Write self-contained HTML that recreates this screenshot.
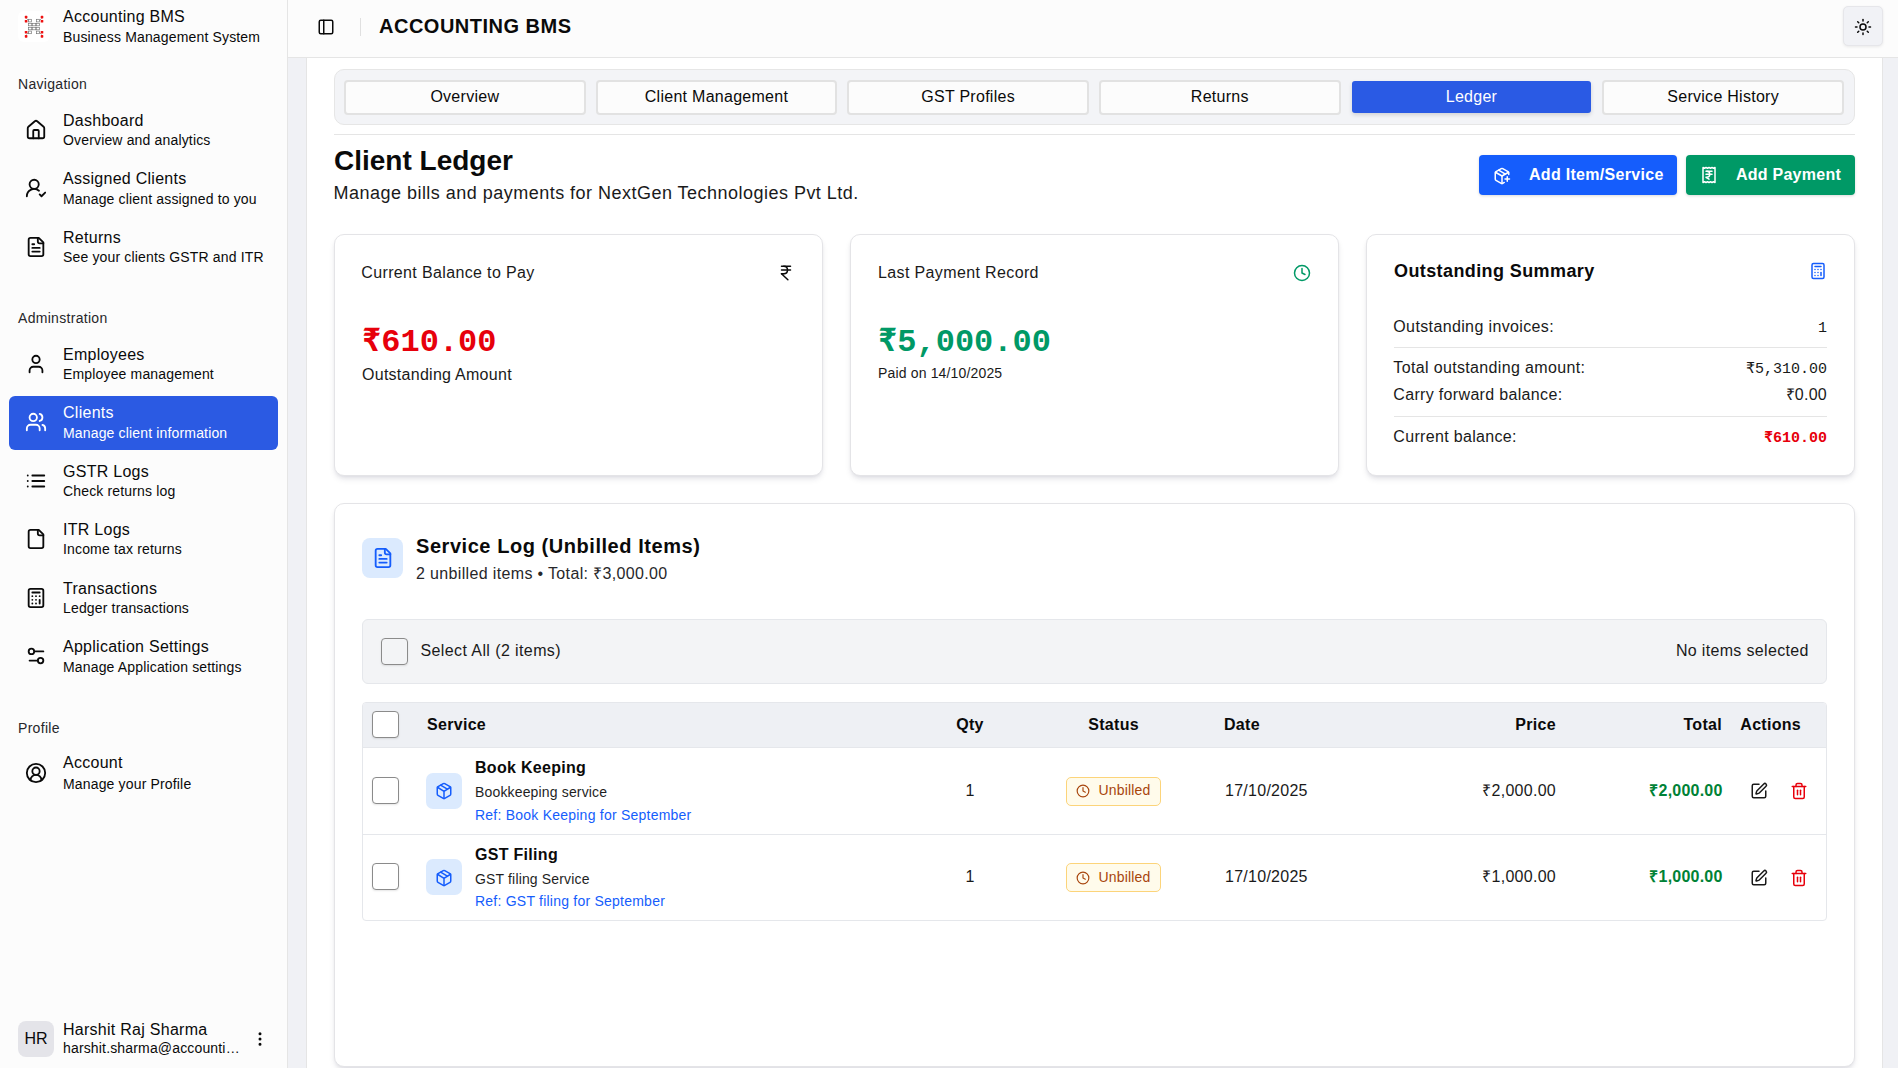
<!DOCTYPE html>
<html><head><meta charset="utf-8"><title>Accounting BMS - Client Ledger</title>
<style>
html,body{margin:0;padding:0;width:1898px;height:1068px;overflow:hidden;background:#fff;}
body{position:relative;font-family:"Liberation Sans",sans-serif;-webkit-font-smoothing:antialiased;}
.b{position:absolute;}
.t{position:absolute;white-space:nowrap;}
.s{font-family:"Liberation Sans",sans-serif;}
.m{font-family:"Liberation Mono",monospace;}
.i{position:absolute;overflow:visible;}
</style></head><body>
<div class="b" style="left:0px;top:0px;width:287px;height:1068px;background:#fcfcfc;"></div>
<div class="b" style="left:287px;top:0px;width:1px;height:1068px;background:#e5e5e5;"></div>
<div class="b" style="left:288px;top:0px;width:1610px;height:57px;background:#fcfcfc;"></div>
<div class="b" style="left:288px;top:57px;width:1610px;height:1px;background:#e5e5e5;"></div>
<div class="b" style="left:288px;top:58px;width:18px;height:1010px;background:#f0f1f5;"></div>
<div class="b" style="left:306px;top:58px;width:1px;height:1010px;background:#e5e5e5;"></div>
<div class="b" style="left:1882px;top:58px;width:1px;height:1010px;background:#e5e5e5;"></div>
<div class="b" style="left:1883px;top:58px;width:15px;height:1010px;background:#f0f1f5;"></div>
<div class="b" style="left:307px;top:58px;width:1575px;height:1010px;background:#ffffff;"></div>
<svg class="i" style="left:18px;top:11px;width:32px;height:31px" viewBox="0 0 32 31">
<rect x="0" y="0" width="32" height="31" rx="6" fill="#ffffff"/>
<g fill="none" stroke="#707070" stroke-width="0.65">
<rect x="10.5" y="8.3" width="3" height="2.6"/><rect x="18.5" y="8.3" width="3" height="2.6"/>
<rect x="10.5" y="12.3" width="3.5" height="2.5"/><rect x="14" y="12.3" width="4" height="2.5"/><rect x="18" y="12.3" width="3.5" height="2.5"/>
<rect x="10.5" y="16.3" width="3.5" height="2.5"/><rect x="14" y="16.3" width="4" height="2.5"/><rect x="18" y="16.3" width="3.5" height="2.5"/>
<rect x="10.5" y="20.1" width="3" height="2.6"/><rect x="18.5" y="20.1" width="3" height="2.6"/>
<path d="M8.5 7.5 L10.5 9.5 M23.5 7.5 L21.5 9.5 M8.5 23.5 L10.5 21.5 M23.5 23.5 L21.5 21.5"/>
</g>
<g fill="#ee1111">
<rect x="6.8" y="4.8" width="2.6" height="2.6" rx="0.6"/><rect x="6.8" y="8.9" width="2.6" height="2.6" rx="0.6"/>
<rect x="6.8" y="20" width="2.6" height="2.6" rx="0.6"/><rect x="6.8" y="24.1" width="2.6" height="2.6" rx="0.6"/>
<rect x="22.7" y="4.8" width="2.6" height="2.6" rx="0.6"/><rect x="22.7" y="8.9" width="2.6" height="2.6" rx="0.6"/>
<rect x="22.7" y="20" width="2.6" height="2.6" rx="0.6"/><rect x="22.7" y="24.1" width="2.6" height="2.6" rx="0.6"/>
</g></svg>
<div class="t s" style="top:9.00px;font-size:16px;line-height:16px;color:#0a0a0a;letter-spacing:0.27px;left:63.00px;">Accounting BMS</div>
<div class="t s" style="top:30.00px;font-size:14px;line-height:14px;color:#0a0a0a;letter-spacing:0.16px;left:63.00px;">Business Management System</div>
<div class="t s" style="top:77.00px;font-size:14px;line-height:14px;color:#27272a;letter-spacing:0.3px;left:18.00px;">Navigation</div>
<div class="t s" style="top:311.00px;font-size:14px;line-height:14px;color:#27272a;letter-spacing:0.3px;left:18.00px;">Adminstration</div>
<div class="t s" style="top:721.00px;font-size:14px;line-height:14px;color:#27272a;letter-spacing:0.3px;left:18.00px;">Profile</div>
<div class="b" style="left:9px;top:396px;width:269px;height:54px;background:#2b5ae3;border-radius:6px;"></div>
<svg class="i" style="left:25.30px;top:118.80px;width:22px;height:22px;color:#0a0a0a" viewBox="0 0 24 24" fill="none" stroke="currentColor" stroke-width="2" stroke-linecap="round" stroke-linejoin="round"><path d="M15 21v-8a1 1 0 0 0-1-1h-4a1 1 0 0 0-1 1v8"/><path d="M3 10a2 2 0 0 1 .709-1.528l7-5.999a2 2 0 0 1 2.582 0l7 5.999A2 2 0 0 1 21 10v9a2 2 0 0 1-2 2H5a2 2 0 0 1-2-2z"/></svg>
<div class="t s" style="top:113.00px;font-size:16px;line-height:16px;color:#0a0a0a;letter-spacing:0.27px;left:63.00px;">Dashboard</div>
<div class="t s" style="top:133.00px;font-size:14px;line-height:14px;color:#0a0a0a;letter-spacing:0.16px;left:63.00px;">Overview and analytics</div>
<svg class="i" style="left:25.30px;top:177.00px;width:22px;height:22px;color:#0a0a0a" viewBox="0 0 24 24" fill="none" stroke="currentColor" stroke-width="2" stroke-linecap="round" stroke-linejoin="round"><path d="M2 21a8 8 0 0 1 13.292-5.984"/><path d="m16 19 2 2 4-4"/><circle cx="10" cy="8" r="5"/></svg>
<div class="t s" style="top:171.00px;font-size:16px;line-height:16px;color:#0a0a0a;letter-spacing:0.27px;left:63.00px;">Assigned Clients</div>
<div class="t s" style="top:192.00px;font-size:14px;line-height:14px;color:#0a0a0a;letter-spacing:0.16px;left:63.00px;">Manage client assigned to you</div>
<svg class="i" style="left:25.30px;top:236.00px;width:22px;height:22px;color:#0a0a0a" viewBox="0 0 24 24" fill="none" stroke="currentColor" stroke-width="2" stroke-linecap="round" stroke-linejoin="round"><path d="M15 2H6a2 2 0 0 0-2 2v16a2 2 0 0 0 2 2h12a2 2 0 0 0 2-2V7Z"/><path d="M14 2v4a2 2 0 0 0 2 2h4"/><path d="M10 9H8"/><path d="M16 13H8"/><path d="M16 17H8"/></svg>
<div class="t s" style="top:230.00px;font-size:16px;line-height:16px;color:#0a0a0a;letter-spacing:0.27px;left:63.00px;">Returns</div>
<div class="t s" style="top:250.00px;font-size:14px;line-height:14px;color:#0a0a0a;letter-spacing:0.16px;left:63.00px;">See your clients GSTR and ITR</div>
<svg class="i" style="left:25.30px;top:352.80px;width:22px;height:22px;color:#0a0a0a" viewBox="0 0 24 24" fill="none" stroke="currentColor" stroke-width="2" stroke-linecap="round" stroke-linejoin="round"><path d="M19 21v-2a4 4 0 0 0-4-4H9a4 4 0 0 0-4 4v2"/><circle cx="12" cy="7" r="4"/></svg>
<div class="t s" style="top:347.00px;font-size:16px;line-height:16px;color:#0a0a0a;letter-spacing:0.27px;left:63.00px;">Employees</div>
<div class="t s" style="top:367.00px;font-size:14px;line-height:14px;color:#0a0a0a;letter-spacing:0.16px;left:63.00px;">Employee management</div>
<svg class="i" style="left:25.30px;top:411.00px;width:22px;height:22px;color:#ffffff" viewBox="0 0 24 24" fill="none" stroke="currentColor" stroke-width="2" stroke-linecap="round" stroke-linejoin="round"><path d="M16 21v-2a4 4 0 0 0-4-4H6a4 4 0 0 0-4 4v2"/><path d="M16 3.128a4 4 0 0 1 0 7.744"/><path d="M22 21v-2a4 4 0 0 0-3-3.87"/><circle cx="9" cy="7" r="4"/></svg>
<div class="t s" style="top:405.00px;font-size:16px;line-height:16px;color:#ffffff;letter-spacing:0.27px;left:63.00px;">Clients</div>
<div class="t s" style="top:426.00px;font-size:14px;line-height:14px;color:#ffffff;letter-spacing:0.16px;left:63.00px;">Manage client information</div>
<svg class="i" style="left:25.30px;top:470.00px;width:22px;height:22px;color:#0a0a0a" viewBox="0 0 24 24" fill="none" stroke="currentColor" stroke-width="2" stroke-linecap="round" stroke-linejoin="round"><path d="M3 12h.01"/><path d="M3 18h.01"/><path d="M3 6h.01"/><path d="M8 12h13"/><path d="M8 18h13"/><path d="M8 6h13"/></svg>
<div class="t s" style="top:464.00px;font-size:16px;line-height:16px;color:#0a0a0a;letter-spacing:0.27px;left:63.00px;">GSTR Logs</div>
<div class="t s" style="top:484.00px;font-size:14px;line-height:14px;color:#0a0a0a;letter-spacing:0.16px;left:63.00px;">Check returns log</div>
<svg class="i" style="left:25.30px;top:527.60px;width:22px;height:22px;color:#0a0a0a" viewBox="0 0 24 24" fill="none" stroke="currentColor" stroke-width="2" stroke-linecap="round" stroke-linejoin="round"><path d="M15 2H6a2 2 0 0 0-2 2v16a2 2 0 0 0 2 2h12a2 2 0 0 0 2-2V7Z"/><path d="M14 2v4a2 2 0 0 0 2 2h4"/></svg>
<div class="t s" style="top:522.00px;font-size:16px;line-height:16px;color:#0a0a0a;letter-spacing:0.27px;left:63.00px;">ITR Logs</div>
<div class="t s" style="top:542.00px;font-size:14px;line-height:14px;color:#0a0a0a;letter-spacing:0.16px;left:63.00px;">Income tax returns</div>
<svg class="i" style="left:25.30px;top:586.70px;width:22px;height:22px;color:#0a0a0a" viewBox="0 0 24 24" fill="none" stroke="currentColor" stroke-width="2" stroke-linecap="round" stroke-linejoin="round"><rect width="16" height="20" x="4" y="2" rx="2"/><line x1="8" x2="16" y1="6" y2="6"/><line x1="16" x2="16" y1="14" y2="18"/><path d="M16 10h.01"/><path d="M12 10h.01"/><path d="M8 10h.01"/><path d="M12 14h.01"/><path d="M8 14h.01"/><path d="M12 18h.01"/><path d="M8 18h.01"/></svg>
<div class="t s" style="top:581.00px;font-size:16px;line-height:16px;color:#0a0a0a;letter-spacing:0.27px;left:63.00px;">Transactions</div>
<div class="t s" style="top:601.00px;font-size:14px;line-height:14px;color:#0a0a0a;letter-spacing:0.16px;left:63.00px;">Ledger transactions</div>
<svg class="i" style="left:25.30px;top:645.10px;width:22px;height:22px;color:#0a0a0a" viewBox="0 0 24 24" fill="none" stroke="currentColor" stroke-width="2" stroke-linecap="round" stroke-linejoin="round"><path d="M20 7h-9"/><path d="M14 17H5"/><circle cx="17" cy="17" r="3"/><circle cx="7" cy="7" r="3"/></svg>
<div class="t s" style="top:639.00px;font-size:16px;line-height:16px;color:#0a0a0a;letter-spacing:0.27px;left:63.00px;">Application Settings</div>
<div class="t s" style="top:660.00px;font-size:14px;line-height:14px;color:#0a0a0a;letter-spacing:0.16px;left:63.00px;">Manage Application settings</div>
<svg class="i" style="left:25.30px;top:762.40px;width:22px;height:22px;color:#0a0a0a" viewBox="0 0 24 24" fill="none" stroke="currentColor" stroke-width="2" stroke-linecap="round" stroke-linejoin="round"><path d="M18 20a6 6 0 0 0-12 0"/><circle cx="12" cy="10" r="4"/><circle cx="12" cy="12" r="10"/></svg>
<div class="t s" style="top:755.00px;font-size:16px;line-height:16px;color:#0a0a0a;letter-spacing:0.27px;left:63.00px;">Account</div>
<div class="t s" style="top:777.00px;font-size:14px;line-height:14px;color:#0a0a0a;letter-spacing:0.16px;left:63.00px;">Manage your Profile</div>
<div class="b" style="left:18px;top:1021px;width:36px;height:36px;background:#e4e4e9;border-radius:8px;"></div>
<div class="t s" style="top:1031.00px;font-size:16px;line-height:16px;color:#0a0a0a;left:36.00px;transform:translateX(-50%);">HR</div>
<div class="t s" style="top:1022.00px;font-size:16px;line-height:16px;color:#0a0a0a;letter-spacing:0.27px;left:63.00px;">Harshit Raj Sharma</div>
<div class="t s" style="top:1041.00px;font-size:14px;line-height:14px;color:#0a0a0a;letter-spacing:0.16px;left:63.00px;">harshit.sharma@accounti…</div>
<svg class="i" style="left:251.00px;top:1030.00px;width:18px;height:18px;color:#0a0a0a" viewBox="0 0 24 24" fill="none" stroke="currentColor" stroke-width="2" stroke-linecap="round" stroke-linejoin="round"><circle cx="12" cy="12" r="1"/><circle cx="12" cy="5" r="1"/><circle cx="12" cy="19" r="1"/></svg>
<svg class="i" style="left:317.00px;top:18.00px;width:18px;height:18px;color:#0a0a0a" viewBox="0 0 24 24" fill="none" stroke="currentColor" stroke-width="2" stroke-linecap="round" stroke-linejoin="round"><rect width="18" height="18" x="3" y="3" rx="2"/><path d="M9 3v18"/></svg>
<div class="b" style="left:360px;top:18px;width:1px;height:18px;background:#e0e0e0;"></div>
<div class="t s" style="top:16.00px;font-size:20px;line-height:20px;color:#0a0a0a;font-weight:700;letter-spacing:0.5px;left:379.00px;">ACCOUNTING BMS</div>
<div class="b" style="left:1843px;top:6px;width:40px;height:40px;background:#f1f2f6;border:1px solid #e6e6ea;border-radius:5px;box-shadow:0 1px 3px rgba(0,0,0,0.08);box-sizing:border-box;"></div>
<svg class="i" style="left:1854.00px;top:18.00px;width:18px;height:18px;color:#0a0a0a" viewBox="0 0 24 24" fill="none" stroke="currentColor" stroke-width="2" stroke-linecap="round" stroke-linejoin="round"><circle cx="12" cy="12" r="4"/><path d="M12 2v2"/><path d="M12 20v2"/><path d="m4.93 4.93 1.41 1.41"/><path d="m17.66 17.66 1.41 1.41"/><path d="M2 12h2"/><path d="M20 12h2"/><path d="m6.34 17.66-1.41 1.41"/><path d="m19.07 4.93-1.41 1.41"/></svg>
<div class="b" style="left:334px;top:69px;width:1521px;height:56px;background:#f3f4f7;border:1px solid #e6e6e6;border-radius:10px;box-sizing:border-box;"></div>
<div class="b" style="left:344.0px;top:79.5px;width:241.7px;height:35px;background:#fcfcfc;border:2px solid #e2e2e2;border-radius:4px;box-sizing:border-box;"></div>
<div class="t s" style="top:89.00px;font-size:16px;line-height:16px;color:#0a0a0a;letter-spacing:0.27px;left:464.80px;transform:translateX(-50%);">Overview</div>
<div class="b" style="left:595.67px;top:79.5px;width:241.7px;height:35px;background:#fcfcfc;border:2px solid #e2e2e2;border-radius:4px;box-sizing:border-box;"></div>
<div class="t s" style="top:89.00px;font-size:16px;line-height:16px;color:#0a0a0a;letter-spacing:0.27px;left:716.47px;transform:translateX(-50%);">Client Management</div>
<div class="b" style="left:847.34px;top:79.5px;width:241.7px;height:35px;background:#fcfcfc;border:2px solid #e2e2e2;border-radius:4px;box-sizing:border-box;"></div>
<div class="t s" style="top:89.00px;font-size:16px;line-height:16px;color:#0a0a0a;letter-spacing:0.27px;left:968.14px;transform:translateX(-50%);">GST Profiles</div>
<div class="b" style="left:1099.01px;top:79.5px;width:241.7px;height:35px;background:#fcfcfc;border:2px solid #e2e2e2;border-radius:4px;box-sizing:border-box;"></div>
<div class="t s" style="top:89.00px;font-size:16px;line-height:16px;color:#0a0a0a;letter-spacing:0.27px;left:1219.81px;transform:translateX(-50%);">Returns</div>
<div class="b" style="left:1352.18px;top:80.7px;width:238.7px;height:32.6px;background:#2a5ae4;border-radius:3px;box-shadow:0 2px 4px rgba(0,0,0,0.14);"></div>
<div class="t s" style="top:89.00px;font-size:16px;line-height:16px;color:#ffffff;letter-spacing:0.27px;left:1471.48px;transform:translateX(-50%);">Ledger</div>
<div class="b" style="left:1602.35px;top:79.5px;width:241.7px;height:35px;background:#fcfcfc;border:2px solid #e2e2e2;border-radius:4px;box-sizing:border-box;"></div>
<div class="t s" style="top:89.00px;font-size:16px;line-height:16px;color:#0a0a0a;letter-spacing:0.27px;left:1723.15px;transform:translateX(-50%);">Service History</div>
<div class="b" style="left:334px;top:134px;width:1521px;height:1px;background:#e5e5e5;"></div>
<div class="t s" style="top:147.00px;font-size:28px;line-height:28px;color:#0a0a0a;font-weight:700;left:334.00px;">Client Ledger</div>
<div class="t s" style="top:184.00px;font-size:18px;line-height:18px;color:#1a1a1a;letter-spacing:0.48px;left:333.50px;">Manage bills and payments for NextGen Technologies Pvt Ltd.</div>
<div class="b" style="left:1479px;top:155px;width:198px;height:40px;background:#155dfc;border-radius:4px;box-shadow:0 1px 3px rgba(0,0,0,0.15);"></div>
<svg class="i" style="left:1493.00px;top:166.50px;width:18px;height:18px;color:#ffffff" viewBox="0 0 24 24" fill="none" stroke="currentColor" stroke-width="2" stroke-linecap="round" stroke-linejoin="round"><path d="M16 16h6"/><path d="M19 13v6"/><path d="M21 10V8a2 2 0 0 0-1-1.73l-7-4a2 2 0 0 0-2 0l-7 4A2 2 0 0 0 3 8v8a2 2 0 0 0 1 1.73l7 4a2 2 0 0 0 2 0l2-1.14"/><path d="m7.5 4.27 9 5.15"/><polyline points="3.29 7 12 12 20.71 7"/><line x1="12" x2="12" y1="22" y2="12"/></svg>
<div class="t s" style="top:167.00px;font-size:16px;line-height:16px;color:#ffffff;font-weight:700;letter-spacing:0.3px;left:1529.00px;">Add Item/Service</div>
<div class="b" style="left:1686px;top:155px;width:169px;height:40px;background:#009966;border-radius:4px;box-shadow:0 1px 3px rgba(0,0,0,0.15);"></div>
<svg class="i" style="left:1699.50px;top:166.00px;width:18px;height:18px;color:#ffffff" viewBox="0 0 24 24" fill="none" stroke="currentColor" stroke-width="2" stroke-linecap="round" stroke-linejoin="round"><path d="M4 2v20l2-1 2 1 2-1 2 1 2-1 2 1 2-1 2 1V2l-2 1-2-1-2 1-2-1-2 1-2-1-2 1Z"/><path d="M8 7h8"/><path d="M12 17.5 8 15h1a4 4 0 0 0 0-8"/><path d="M8 11h8"/></svg>
<div class="t s" style="top:167.00px;font-size:16px;line-height:16px;color:#ffffff;font-weight:700;letter-spacing:0.25px;left:1736.00px;">Add Payment</div>
<div class="b" style="left:334px;top:234px;width:489px;height:242px;background:#fff;border:1px solid #e4e4e7;border-radius:10px;box-shadow:0 4px 6px -1px rgba(20,20,60,0.10),0 2px 4px -2px rgba(20,20,60,0.10);box-sizing:border-box;"></div>
<div class="b" style="left:850px;top:234px;width:489px;height:242px;background:#fff;border:1px solid #e4e4e7;border-radius:10px;box-shadow:0 4px 6px -1px rgba(20,20,60,0.10),0 2px 4px -2px rgba(20,20,60,0.10);box-sizing:border-box;"></div>
<div class="b" style="left:1366px;top:234px;width:489px;height:242px;background:#fff;border:1px solid #e4e4e7;border-radius:10px;box-shadow:0 4px 6px -1px rgba(20,20,60,0.10),0 2px 4px -2px rgba(20,20,60,0.10);box-sizing:border-box;"></div>
<div class="t s" style="top:265.00px;font-size:16px;line-height:16px;color:#1a1a1a;letter-spacing:0.36px;left:361.30px;">Current Balance to Pay</div>
<svg class="i" style="left:776.80px;top:263.60px;width:18px;height:18px;color:#0a0a0a" viewBox="0 0 24 24" fill="none" stroke="currentColor" stroke-width="2" stroke-linecap="round" stroke-linejoin="round"><path d="M6 3h12"/><path d="M6 8h12"/><path d="m6 13 8.5 8"/><path d="M6 13h3"/><path d="M9 13c6.667 0 6.667-10 0-10"/></svg>
<div class="t m" style="top:327.00px;font-size:32px;line-height:32px;color:#e7000b;font-weight:700;left:362.00px;">₹610.00</div>
<div class="t s" style="top:367.00px;font-size:16px;line-height:16px;color:#1a1a1a;letter-spacing:0.27px;left:362.00px;">Outstanding Amount</div>
<div class="t s" style="top:265.00px;font-size:16px;line-height:16px;color:#1a1a1a;letter-spacing:0.37px;left:878.00px;">Last Payment Record</div>
<svg class="i" style="left:1292.50px;top:264.00px;width:18px;height:18px;color:#009966" viewBox="0 0 24 24" fill="none" stroke="currentColor" stroke-width="2" stroke-linecap="round" stroke-linejoin="round"><circle cx="12" cy="12" r="10"/><polyline points="12 6 12 12 16 14"/></svg>
<div class="t m" style="top:327.00px;font-size:32px;line-height:32px;color:#009966;font-weight:700;left:878.00px;">₹5,000.00</div>
<div class="t s" style="top:366.00px;font-size:14px;line-height:14px;color:#1a1a1a;letter-spacing:0.16px;left:878.00px;">Paid on 14/10/2025</div>
<div class="t s" style="top:262.00px;font-size:18px;line-height:18px;color:#0a0a0a;font-weight:700;letter-spacing:0.4px;left:1394.00px;">Outstanding Summary</div>
<svg class="i" style="left:1809.00px;top:262.00px;width:18px;height:18px;color:#155dfc" viewBox="0 0 24 24" fill="none" stroke="currentColor" stroke-width="2" stroke-linecap="round" stroke-linejoin="round"><rect width="16" height="20" x="4" y="2" rx="2"/><line x1="8" x2="16" y1="6" y2="6"/><line x1="16" x2="16" y1="14" y2="18"/><path d="M16 10h.01"/><path d="M12 10h.01"/><path d="M8 10h.01"/><path d="M12 14h.01"/><path d="M8 14h.01"/><path d="M12 18h.01"/><path d="M8 18h.01"/></svg>
<div class="t s" style="top:319.00px;font-size:16px;line-height:16px;color:#1a1a1a;letter-spacing:0.37px;left:1393.30px;">Outstanding invoices:</div>
<div class="t m" style="top:321.00px;font-size:15px;line-height:15px;color:#1a1a1a;right:71.00px;">1</div>
<div class="b" style="left:1394px;top:347px;width:433px;height:1px;background:#e5e5e5;"></div>
<div class="t s" style="top:360.00px;font-size:16px;line-height:16px;color:#1a1a1a;letter-spacing:0.35px;left:1393.30px;">Total outstanding amount:</div>
<div class="t m" style="top:362.00px;font-size:15px;line-height:15px;color:#1a1a1a;right:71.00px;">₹5,310.00</div>
<div class="t s" style="top:387.00px;font-size:16px;line-height:16px;color:#1a1a1a;letter-spacing:0.33px;left:1393.30px;">Carry forward balance:</div>
<div class="t s" style="top:387.00px;font-size:16px;line-height:16px;color:#1a1a1a;letter-spacing:0.27px;right:71.00px;">₹0.00</div>
<div class="b" style="left:1394px;top:416px;width:433px;height:1px;background:#e5e5e5;"></div>
<div class="t s" style="top:429.00px;font-size:16px;line-height:16px;color:#1a1a1a;letter-spacing:0.33px;left:1393.30px;">Current balance:</div>
<div class="t m" style="top:431.00px;font-size:15px;line-height:15px;color:#e7000b;font-weight:700;right:71.00px;">₹610.00</div>
<div class="b" style="left:334px;top:503px;width:1521px;height:564px;background:#fff;border:1px solid #e4e4e7;border-radius:10px;box-shadow:0 4px 6px -1px rgba(20,20,60,0.10),0 2px 4px -2px rgba(20,20,60,0.10);box-sizing:border-box;"></div>
<div class="b" style="left:362px;top:538px;width:41px;height:40px;background:#dbeafe;border-radius:8px;"></div>
<svg class="i" style="left:371.50px;top:547.20px;width:22px;height:22px;color:#155dfc" viewBox="0 0 24 24" fill="none" stroke="currentColor" stroke-width="2" stroke-linecap="round" stroke-linejoin="round"><path d="M15 2H6a2 2 0 0 0-2 2v16a2 2 0 0 0 2 2h12a2 2 0 0 0 2-2V7Z"/><path d="M14 2v4a2 2 0 0 0 2 2h4"/><path d="M10 9H8"/><path d="M16 13H8"/><path d="M16 17H8"/></svg>
<div class="t s" style="top:536.00px;font-size:20px;line-height:20px;color:#0a0a0a;font-weight:700;letter-spacing:0.55px;left:416.00px;">Service Log (Unbilled Items)</div>
<div class="t s" style="top:566.00px;font-size:16px;line-height:16px;color:#27272a;letter-spacing:0.35px;left:416.00px;">2 unbilled items • Total: ₹3,000.00</div>
<div class="b" style="left:362px;top:619px;width:1465px;height:65px;background:#f3f4f6;border:1px solid #e5e7eb;border-radius:6px;box-sizing:border-box;"></div>
<div class="b" style="left:381px;top:638px;width:27px;height:27px;background:transparent;border:1px solid #8b8b8b;border-radius:4px;box-shadow:0 1px 2px rgba(0,0,0,0.1);box-sizing:border-box;"></div>
<div class="t s" style="top:643.00px;font-size:16px;line-height:16px;color:#1a1a1a;letter-spacing:0.4px;left:420.50px;">Select All (2 items)</div>
<div class="t s" style="top:643.00px;font-size:16px;line-height:16px;color:#1a1a1a;letter-spacing:0.33px;right:89.30px;">No items selected</div>
<div class="b" style="left:362px;top:702px;width:1465px;height:219px;background:#fff;border:1px solid #e5e7eb;border-radius:4px;box-sizing:border-box;overflow:hidden;"></div>
<div class="b" style="left:363px;top:703px;width:1463px;height:44px;background:#eef0f4;border-radius:3px 3px 0 0;"></div>
<div class="b" style="left:363px;top:747px;width:1463px;height:1px;background:#e5e7eb;"></div>
<div class="b" style="left:372px;top:711px;width:27px;height:27px;background:#fff;border:1px solid #8b8b8b;border-radius:4px;box-shadow:0 1px 2px rgba(0,0,0,0.1);box-sizing:border-box;"></div>
<div class="t s" style="top:717.00px;font-size:16px;line-height:16px;color:#0a0a0a;font-weight:700;letter-spacing:0.3px;left:427.00px;">Service</div>
<div class="t s" style="top:717.00px;font-size:16px;line-height:16px;color:#0a0a0a;font-weight:700;letter-spacing:0.3px;left:970.00px;transform:translateX(-50%);">Qty</div>
<div class="t s" style="top:717.00px;font-size:16px;line-height:16px;color:#0a0a0a;font-weight:700;letter-spacing:0.3px;left:1113.60px;transform:translateX(-50%);">Status</div>
<div class="t s" style="top:717.00px;font-size:16px;line-height:16px;color:#0a0a0a;font-weight:700;letter-spacing:0.3px;left:1224.00px;">Date</div>
<div class="t s" style="top:717.00px;font-size:16px;line-height:16px;color:#0a0a0a;font-weight:700;letter-spacing:0.3px;right:342.00px;">Price</div>
<div class="t s" style="top:717.00px;font-size:16px;line-height:16px;color:#0a0a0a;font-weight:700;letter-spacing:0.3px;right:176.00px;">Total</div>
<div class="t s" style="top:717.00px;font-size:16px;line-height:16px;color:#0a0a0a;font-weight:700;letter-spacing:0.3px;left:1770.70px;transform:translateX(-50%);">Actions</div>
<div class="b" style="left:363px;top:834px;width:1463px;height:1px;background:#e5e7eb;"></div>
<div class="b" style="left:372px;top:777px;width:27px;height:27px;background:#fff;border:1px solid #8b8b8b;border-radius:4px;box-shadow:0 1px 2px rgba(0,0,0,0.1);box-sizing:border-box;"></div>
<div class="b" style="left:426px;top:773px;width:36px;height:36px;background:#dbeafe;border-radius:7px;"></div>
<svg class="i" style="left:435.00px;top:782.00px;width:18px;height:18px;color:#155dfc" viewBox="0 0 24 24" fill="none" stroke="currentColor" stroke-width="2" stroke-linecap="round" stroke-linejoin="round"><path d="M11 21.73a2 2 0 0 0 2 0l7-4A2 2 0 0 0 21 16V8a2 2 0 0 0-1-1.73l-7-4a2 2 0 0 0-2 0l-7 4A2 2 0 0 0 3 8v8a2 2 0 0 0 1 1.73z"/><path d="M12 22V12"/><path d="m3.3 7 7.703 4.734a2 2 0 0 0 1.994 0L20.7 7"/><path d="m7.5 4.27 9 5.15"/></svg>
<div class="t s" style="top:760.00px;font-size:16px;line-height:16px;color:#0a0a0a;font-weight:700;letter-spacing:0.3px;left:475.00px;">Book Keeping</div>
<div class="t s" style="top:785.00px;font-size:14px;line-height:14px;color:#1f1f1f;letter-spacing:0.16px;left:475.00px;">Bookkeeping service</div>
<div class="t s" style="top:808.00px;font-size:14px;line-height:14px;color:#155dfc;letter-spacing:0.23px;left:475.00px;">Ref: Book Keeping for September</div>
<div class="t s" style="top:783.00px;font-size:16px;line-height:16px;color:#1a1a1a;letter-spacing:0.27px;left:970.00px;transform:translateX(-50%);">1</div>
<div class="b" style="left:1066px;top:777px;width:95px;height:29px;background:#fffbeb;border:1px solid #fcd47a;border-radius:5px;box-sizing:border-box;"></div>
<svg class="i" style="left:1075.80px;top:784.10px;width:14px;height:14px;color:#a8450c" viewBox="0 0 24 24" fill="none" stroke="currentColor" stroke-width="2" stroke-linecap="round" stroke-linejoin="round"><circle cx="12" cy="12" r="10"/><polyline points="12 6 12 12 16 14"/></svg>
<div class="t s" style="top:783.00px;font-size:14px;line-height:14px;color:#a8450c;letter-spacing:0.16px;left:1098.50px;">Unbilled</div>
<div class="t s" style="top:783.00px;font-size:16px;line-height:16px;color:#1a1a1a;letter-spacing:0.27px;left:1225.00px;">17/10/2025</div>
<div class="t s" style="top:783.00px;font-size:16px;line-height:16px;color:#1a1a1a;letter-spacing:0.27px;right:342.00px;">₹2,000.00</div>
<div class="t s" style="top:783.00px;font-size:16px;line-height:16px;color:#008236;font-weight:700;letter-spacing:0.2px;right:175.50px;">₹2,000.00</div>
<svg class="i" style="left:1750.30px;top:782.00px;width:18px;height:18px;color:#1a1a1a" viewBox="0 0 24 24" fill="none" stroke="currentColor" stroke-width="2" stroke-linecap="round" stroke-linejoin="round"><path d="M12 3H5a2 2 0 0 0-2 2v14a2 2 0 0 0 2 2h14a2 2 0 0 0 2-2v-7"/><path d="M18.375 2.625a1 1 0 0 1 3 3l-9.013 9.014a2 2 0 0 1-.853.505l-2.873.84a.5.5 0 0 1-.62-.62l.84-2.873a2 2 0 0 1 .506-.852z"/></svg>
<svg class="i" style="left:1790.00px;top:782.30px;width:18px;height:18px;color:#e7000b" viewBox="0 0 24 24" fill="none" stroke="currentColor" stroke-width="2" stroke-linecap="round" stroke-linejoin="round"><path d="M3 6h18"/><path d="M19 6v14c0 1-1 2-2 2H7c-1 0-2-1-2-2V6"/><path d="M8 6V4c0-1 1-2 2-2h4c1 0 2 1 2 2v2"/><line x1="10" x2="10" y1="11" y2="17"/><line x1="14" x2="14" y1="11" y2="17"/></svg>
<div class="b" style="left:372px;top:863px;width:27px;height:27px;background:#fff;border:1px solid #8b8b8b;border-radius:4px;box-shadow:0 1px 2px rgba(0,0,0,0.1);box-sizing:border-box;"></div>
<div class="b" style="left:426px;top:859px;width:36px;height:36px;background:#dbeafe;border-radius:7px;"></div>
<svg class="i" style="left:435.00px;top:868.50px;width:18px;height:18px;color:#155dfc" viewBox="0 0 24 24" fill="none" stroke="currentColor" stroke-width="2" stroke-linecap="round" stroke-linejoin="round"><path d="M11 21.73a2 2 0 0 0 2 0l7-4A2 2 0 0 0 21 16V8a2 2 0 0 0-1-1.73l-7-4a2 2 0 0 0-2 0l-7 4A2 2 0 0 0 3 8v8a2 2 0 0 0 1 1.73z"/><path d="M12 22V12"/><path d="m3.3 7 7.703 4.734a2 2 0 0 0 1.994 0L20.7 7"/><path d="m7.5 4.27 9 5.15"/></svg>
<div class="t s" style="top:847.00px;font-size:16px;line-height:16px;color:#0a0a0a;font-weight:700;letter-spacing:0.3px;left:475.00px;">GST Filing</div>
<div class="t s" style="top:872.00px;font-size:14px;line-height:14px;color:#1f1f1f;letter-spacing:0.16px;left:475.00px;">GST filing Service</div>
<div class="t s" style="top:894.00px;font-size:14px;line-height:14px;color:#155dfc;letter-spacing:0.23px;left:475.00px;">Ref: GST filing for September</div>
<div class="t s" style="top:869.00px;font-size:16px;line-height:16px;color:#1a1a1a;letter-spacing:0.27px;left:970.00px;transform:translateX(-50%);">1</div>
<div class="b" style="left:1066px;top:863px;width:95px;height:29px;background:#fffbeb;border:1px solid #fcd47a;border-radius:5px;box-sizing:border-box;"></div>
<svg class="i" style="left:1075.80px;top:870.60px;width:14px;height:14px;color:#a8450c" viewBox="0 0 24 24" fill="none" stroke="currentColor" stroke-width="2" stroke-linecap="round" stroke-linejoin="round"><circle cx="12" cy="12" r="10"/><polyline points="12 6 12 12 16 14"/></svg>
<div class="t s" style="top:870.00px;font-size:14px;line-height:14px;color:#a8450c;letter-spacing:0.16px;left:1098.50px;">Unbilled</div>
<div class="t s" style="top:869.00px;font-size:16px;line-height:16px;color:#1a1a1a;letter-spacing:0.27px;left:1225.00px;">17/10/2025</div>
<div class="t s" style="top:869.00px;font-size:16px;line-height:16px;color:#1a1a1a;letter-spacing:0.27px;right:342.00px;">₹1,000.00</div>
<div class="t s" style="top:869.00px;font-size:16px;line-height:16px;color:#008236;font-weight:700;letter-spacing:0.2px;right:175.50px;">₹1,000.00</div>
<svg class="i" style="left:1750.30px;top:868.50px;width:18px;height:18px;color:#1a1a1a" viewBox="0 0 24 24" fill="none" stroke="currentColor" stroke-width="2" stroke-linecap="round" stroke-linejoin="round"><path d="M12 3H5a2 2 0 0 0-2 2v14a2 2 0 0 0 2 2h14a2 2 0 0 0 2-2v-7"/><path d="M18.375 2.625a1 1 0 0 1 3 3l-9.013 9.014a2 2 0 0 1-.853.505l-2.873.84a.5.5 0 0 1-.62-.62l.84-2.873a2 2 0 0 1 .506-.852z"/></svg>
<svg class="i" style="left:1790.00px;top:868.80px;width:18px;height:18px;color:#e7000b" viewBox="0 0 24 24" fill="none" stroke="currentColor" stroke-width="2" stroke-linecap="round" stroke-linejoin="round"><path d="M3 6h18"/><path d="M19 6v14c0 1-1 2-2 2H7c-1 0-2-1-2-2V6"/><path d="M8 6V4c0-1 1-2 2-2h4c1 0 2 1 2 2v2"/><line x1="10" x2="10" y1="11" y2="17"/><line x1="14" x2="14" y1="11" y2="17"/></svg>
</body></html>
